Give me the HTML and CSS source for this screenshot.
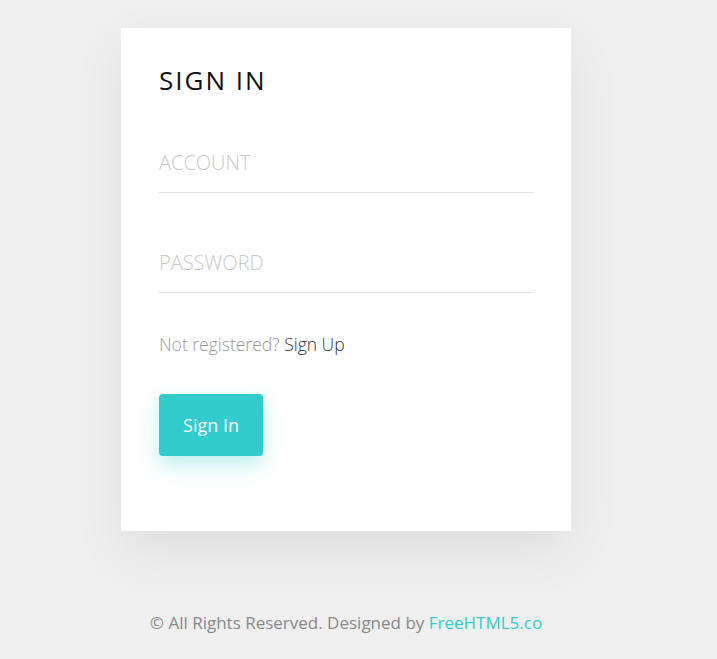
FILE: index.html
```html
<!DOCTYPE html>
<html>
<head>
<meta charset="utf-8">
<link rel="stylesheet" href="styles.css">
</head>
<body>
<div class="page">
  <form class="card">
    <h2 class="title">SIGN IN</h2>
    <div class="field"><input class="input" type="text" placeholder="ACCOUNT"></div>
    <div class="field"><input class="input" type="password" placeholder="PASSWORD"></div>
    <p class="note">Not registered? <a class="note-link" href="#">Sign Up</a></p>
    <button class="btn" type="button">Sign In</button>
  </form>
  <p class="footer">© All Rights Reserved. Designed by <a class="footer-link" href="#">FreeHTML5.co</a></p>
</div>
</body>
</html>
```
FILE: styles.css
```css
html, body { margin: 0; padding: 0; }
body {
  background: #efefef;
  font-family: "Open Sans", "Liberation Sans", sans-serif;
  width: 717px;
  height: 659px;
  overflow: hidden;
}
.page {
  width: 692px;
  padding-top: 28px;
  display: flex;
  flex-direction: column;
  align-items: center;
}
.card {
  box-sizing: border-box;
  width: 450px;
  height: 503px;
  background: #fff;
  padding: 36px 37px 0 38px;
  box-shadow: 0 20px 50px rgba(0,0,0,0.07);
  display: flex;
  flex-direction: column;
}
.title {
  margin: 0;
  font-size: 26px;
  font-weight: 400;
  letter-spacing: 2px;
  color: #111;
  line-height: 32px;
}
.field {
  margin-top: 32px;
}
.field + .field { margin-top: 35px; }
.input {
  box-sizing: border-box;
  width: 100%;
  height: 65px;
  border: none;
  border-bottom: 1px solid #e2e2e2;
  padding: 5px 0 0;
  font-family: inherit;
  font-size: 20px;
  font-weight: 300;
  color: #333;
  outline: none;
  background: transparent;
}
.input::placeholder { color: #c8c8c8; }
.note {
  margin: 37px 0 0;
  font-size: 17.5px;
  font-weight: 300;
  color: #999;
  line-height: 28px;
}
.note-link { color: #333; text-decoration: none; }
.btn {
  margin-top: 36px;
  align-self: flex-start;
  width: 104px;
  height: 62px;
  border: none;
  border-radius: 4px;
  background: #33cccc;
  color: #fff;
  font-family: inherit;
  font-size: 18px;
  font-weight: 400;
  box-shadow: 0 8px 20px rgba(51,204,204,0.35);
  cursor: pointer;
}
.footer {
  margin: 80px 0 0;
  font-size: 17px;
  color: #888;
  line-height: 24px;
}
.footer-link { color: #33cccc; text-decoration: none; }
```
